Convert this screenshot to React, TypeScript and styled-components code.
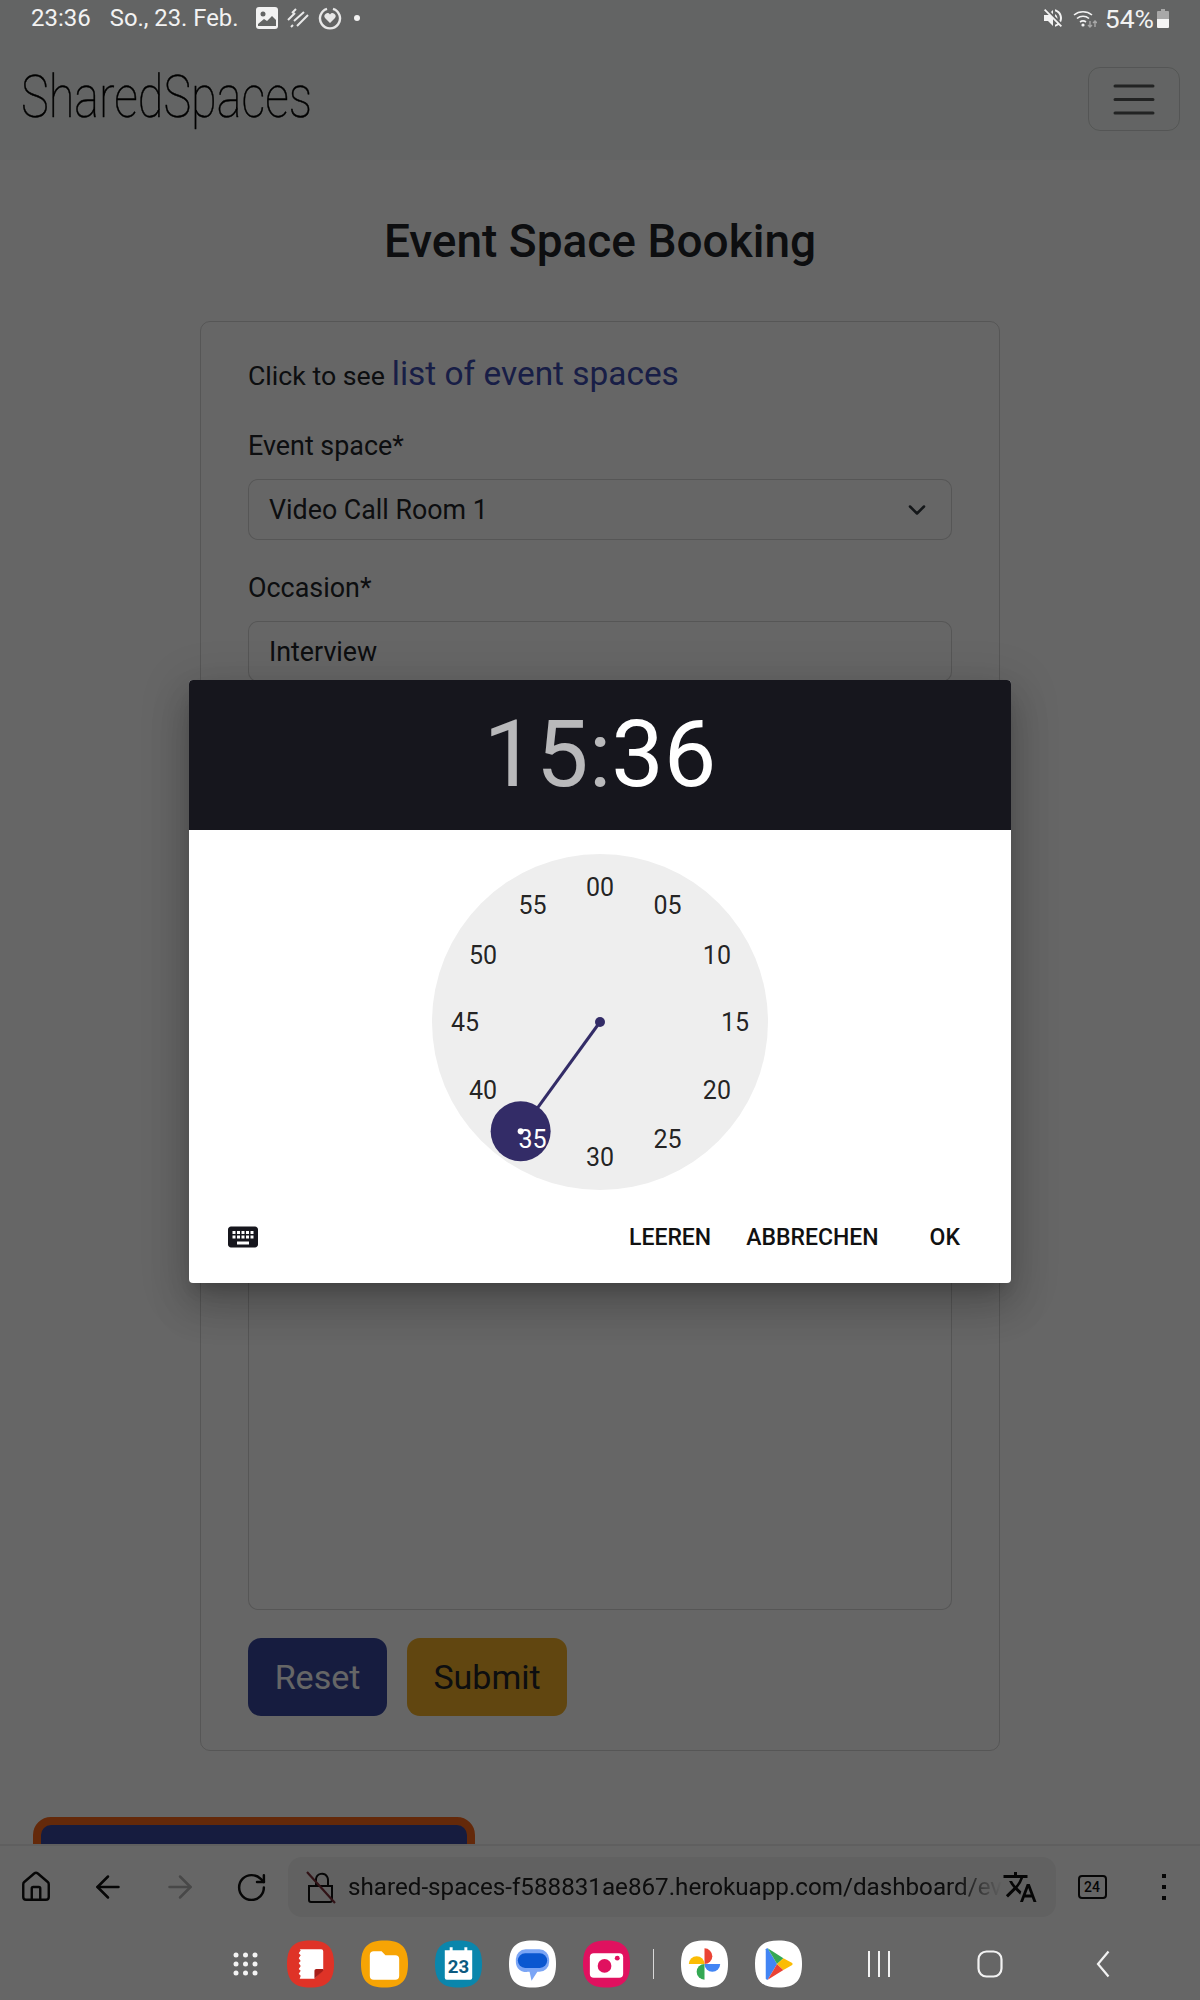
import * as React from "react";
import styled, { createGlobalStyle } from "styled-components";
import { ArrowLeft, ArrowRight, ChevronDown, House, RotateCw } from "lucide-react";
import { MdKeyboard, MdTranslate, MdVolumeOff } from "react-icons/md";

const GlobalStyle = createGlobalStyle`
  html, body {
    margin: 0;
    padding: 0;
    background: #fff;
  }
  * {
    box-sizing: border-box;
  }
  body {
    font-family: Roboto, "Liberation Sans", sans-serif;
    color: #212529;
  }
`;

const Screen = styled.div`
  position: relative;
  display: flex;
  flex-direction: column;
  width: 1200px;
  height: 2000px;
  overflow: hidden;
  background: #fff;
`;

const Backdrop = styled.div`
  position: absolute;
  inset: 0;
  z-index: 1;
  background: rgba(0, 0, 0, 0.6);
`;

/* ---- page behind the dialog ---- */

const Viewport = styled.div`
  height: 1844px;
  overflow: hidden;
  flex: none;
`;

const Navbar = styled.header`
  display: flex;
  flex-direction: column;
  height: 160px;
  padding-top: 40px;
  background: #f7fbf9;
`;

const NavRow = styled.div`
  display: flex;
  align-items: flex-start;
  justify-content: space-between;
  padding: 27px 20px 0 21px;
`;

const Brand = styled.a`
  display: block;
  font-size: 60px;
  font-weight: 100;
  line-height: 60px;
  color: #000;
  white-space: nowrap;
  -webkit-text-stroke: 0.5px #000;
  transform: scaleX(0.78);
  transform-origin: left center;
`;

const Toggler = styled.button`
  display: flex;
  align-items: center;
  justify-content: center;
  width: 92px;
  height: 64px;
  padding: 0;
  background: transparent;
  border: 1px solid rgba(0, 0, 0, 0.15);
  border-radius: 12px;
`;

const Main = styled.main`
  padding-top: 51px;
`;

const Title = styled.h1`
  margin: 0 0 50px;
  font-size: 46px;
  font-weight: 500;
  line-height: 60px;
  text-align: center;
`;

const Card = styled.section`
  width: 800px;
  height: 1430px;
  margin: 0 auto;
  padding: 28px 47px 0;
  border: 1px solid rgba(0, 0, 0, 0.16);
  border-radius: 10px;
`;

const Intro = styled.p`
  display: flex;
  align-items: baseline;
  gap: 7px;
  height: 48px;
  margin: 0 0 29px;
  font-size: 26.7px;
  line-height: 48px;
`;

const Link = styled.a`
  font-size: 33.400px;
  color: #3d4bb0;
`;

const Field = styled.div`
  margin-bottom: 29px;
`;

const Label = styled.label`
  display: block;
  margin-bottom: 14px;
  font-size: 26.9px;
  line-height: 38px;
`;

const Control = styled.div`
  display: flex;
  align-items: center;
  justify-content: space-between;
  height: 61px;
  padding: 0 20px;
  font-size: 26.8px;
  background: #fff;
  border: 1px solid rgba(0, 0, 0, 0.16);
  border-radius: 10px;
`;

const TextArea = styled(Control)`
  height: 421px;
`;

const Actions = styled.div`
  display: flex;
  gap: 20px;
  margin-top: -1px;
`;

const Button = styled.button<{ $tone: "reset" | "submit" }>`
  height: 78px;
  width: ${(p) => (p.$tone === "reset" ? "139px" : "160px")};
  padding: 0;
  font-family: inherit;
  font-size: 34px;
  color: ${(p) => (p.$tone === "reset" ? "#fff" : "#212529")};
  background: ${(p) => (p.$tone === "reset" ? "#37489f" : "#f2af28")};
  border: 0;
  border-radius: 13px;
`;

const FooterBox = styled.div`
  width: 442px;
  height: 120px;
  margin: 66px 0 0 33px;
  background: #38489f;
  border: 8px solid #fa6819;
  border-radius: 18px;
`;

/* ---- browser toolbar ---- */

const Toolbar = styled.nav`
  display: flex;
  align-items: center;
  height: 84px;
  flex: none;
  background: #fff;
  border-top: 2px solid #eee;
`;

const ToolIcon = styled.span<{ $w: number; $muted?: boolean }>`
  display: flex;
  align-items: center;
  justify-content: center;
  width: ${(p) => p.$w}px;
  flex: none;
  color: ${(p) => (p.$muted ? "#b4b4b4" : "#111")};
`;

const MoreIcon = styled(ToolIcon)`
  margin-left: 24px;
`;

const UrlPill = styled.div`
  display: flex;
  align-items: center;
  width: 768px;
  height: 60px;
  margin: 0 6px 0 2px;
  padding: 0 18px 0 18px;
  flex: none;
  background: #f2f2f2;
  border-radius: 14px;
`;

const UrlText = styled.span`
  flex: 1;
  margin-left: 12px;
  overflow: hidden;
  font-size: 24.2px;
  color: #222;
  white-space: nowrap;
  mask-image: linear-gradient(to right, #000 93%, transparent 100%);
`;

const TabCount = styled.span`
  display: flex;
  align-items: center;
  justify-content: center;
  width: 29px;
  height: 24px;
  font-size: 14px;
  font-weight: 500;
  color: #111;
  border: 2px solid #111;
  border-radius: 4px;
`;

/* ---- system bars, not dimmed ---- */

const StatusBar = styled.div`
  position: absolute;
  top: 0;
  left: 0;
  right: 0;
  z-index: 2;
  display: flex;
  align-items: center;
  height: 36px;
  padding: 0 31px;
  font-size: 24px;
  color: #f2f2f2;
`;

const StatusDate = styled.span`
  margin-left: 19px;
  margin-right: 18px;
  font-size: 23.8px;
`;

const StatusIcons = styled.div`
  display: flex;
  align-items: center;
  gap: 9px;
`;

const NotifyDot = styled.svg`
  margin-left: 3px;
`;

const StatusRight = styled.div`
  display: flex;
  align-items: center;
  gap: 8px;
  margin-left: auto;
  font-size: 26.5px;
`;

const BatteryIcon = styled.svg`
  margin-left: -5px;
`;

const Taskbar = styled.div`
  position: relative;
  z-index: 2;
  display: flex;
  align-items: center;
  height: 72px;
  flex: none;
  padding: 0 0 0 233px;
`;

const Apps = styled.div`
  display: flex;
  align-items: center;
  gap: 27px;
  margin-left: 29px;
`;

const Divider = styled.span`
  width: 1px;
  height: 30px;
  margin: 0 0 0 -4px;
  background: #d8d8d8;
`;

const SoftKeys = styled.div`
  display: flex;
  align-items: center;
  margin-left: 65px;
`;

const HomeKey = styled.svg`
  margin-left: 86px;
`;

const BackKey = styled.svg`
  margin-left: 93px;
`;

/* ---- time picker dialog ---- */

const Dialog = styled.div`
  position: absolute;
  top: 680px;
  left: 189px;
  z-index: 3;
  display: flex;
  flex-direction: column;
  width: 822px;
  height: 603px;
  overflow: hidden;
  background: #fff;
  border-radius: 4px;
  box-shadow: 0 11px 15px -7px rgba(0, 0, 0, 0.2), 0 24px 38px 3px rgba(0, 0, 0, 0.14),
    0 9px 46px 8px rgba(0, 0, 0, 0.12);
`;

const DialogHead = styled.div`
  display: flex;
  align-items: center;
  justify-content: center;
  height: 150px;
  flex: none;
  font-size: 93.500px;
  line-height: 1;
  background: #16161d;
`;

const TimePart = styled.span<{ $active?: boolean }>`
  color: ${(p) => (p.$active ? "#fff" : "rgba(255, 255, 255, 0.7)")};
`;

const DialogBody = styled.div`
  display: flex;
  justify-content: center;
  padding-top: 24px;
`;

const Clock = styled.div`
  position: relative;
  width: 336px;
  height: 336px;
  background: #eee;
  border-radius: 50%;
`;

const ClockDrawing = styled.svg`
  position: absolute;
  inset: 0;
`;

const Minute = styled.span<{ $selected?: boolean }>`
  position: absolute;
  font-size: 25px;
  line-height: 1;
  color: ${(p) => (p.$selected ? "#fff" : "rgba(0, 0, 0, 0.87)")};
  transform: translate(-50%, -50%);
`;

const DialogActions = styled.div`
  display: flex;
  align-items: center;
  height: 93px;
  margin-top: auto;
  padding: 1px 51px 0 36px;
`;

const ActionButton = styled.button<{ $wide?: boolean }>`
  margin-left: ${(p) => (p.$wide ? "51px" : "35px")};
  padding: 0;
  font-family: inherit;
  font-size: 23px;
  font-weight: 500;
  color: #111;
  background: none;
  border: 0;
`;

const KeyboardButton = styled.span`
  display: flex;
  margin-right: auto;
  color: #16161d;
`;

const minutes = ["00", "05", "10", "15", "20", "25", "30", "35", "40", "45", "50", "55"];

const Squircle: React.FC<{ fill: string; children?: React.ReactNode }> = ({ fill, children }) => (
  <svg width="47" height="48" viewBox="0 0 48 48">
    <path d="M24 0C41 0 48 7 48 24 48 41 41 48 24 48 7 48 0 41 0 24 0 7 7 0 24 0Z" fill={fill} />
    {children}
  </svg>
);

const ClockFace = () => {
  const center = 168;
  const handX = center + 135 * Math.sin((216 * Math.PI) / 180);
  const handY = center - 135 * Math.cos((216 * Math.PI) / 180);
  return (
    <Clock>
      <ClockDrawing width="336" height="336">
        <circle cx={center} cy={center} r="5" fill="#332c67" />
        <line x1={center} y1={center} x2={handX} y2={handY} stroke="#332c67" strokeWidth="3" />
        <circle cx={handX} cy={handY} r="30" fill="#332c67" />
        <circle cx={handX} cy={handY} r="3" fill="#fff" />
      </ClockDrawing>
      {minutes.map((m, i) => {
        const a = (i * 30 * Math.PI) / 180;
        return (
          <Minute
            key={m}
            $selected={m === "35"}
            style={{ left: center + 135 * Math.sin(a), top: center - 135 * Math.cos(a) }}
          >
            {m}
          </Minute>
        );
      })}
    </Clock>
  );
};

const App: React.FC = () => (
  <Screen>
    <GlobalStyle />
    <Viewport>
      <Navbar>
        <NavRow>
          <Brand>SharedSpaces</Brand>
          <Toggler aria-label="menu">
            <svg width="42" height="32" viewBox="0 0 42 32">
              <path d="M2 3h38M2 16.500h38M2 30h38" stroke="#000" strokeOpacity="0.65" strokeWidth="3" strokeLinecap="round" />
            </svg>
          </Toggler>
        </NavRow>
      </Navbar>
      <Main>
        <Title>Event Space Booking</Title>
        <Card>
          <Intro>
            Click to see <Link>list of event spaces</Link>
          </Intro>
          <Field>
            <Label>Event space*</Label>
            <Control>
              Video Call Room 1
              <ChevronDown size={28} strokeWidth={2.2} color="#343a40" />
            </Control>
          </Field>
          <Field>
            <Label>Occasion*</Label>
            <Control>Interview</Control>
          </Field>
          <Field>
            <Label>Date*</Label>
            <Control />
          </Field>
          <Field>
            <Label>Start time*</Label>
            <Control />
          </Field>
          <Field>
            <Label>End time*</Label>
            <Control />
          </Field>
          <Field>
            <Label>Notes</Label>
            <TextArea />
          </Field>
          <Actions>
            <Button $tone="reset">Reset</Button>
            <Button $tone="submit">Submit</Button>
          </Actions>
        </Card>
        <FooterBox />
      </Main>
    </Viewport>

    <Toolbar>
      <ToolIcon $w={72}>
        <House size={34} strokeWidth={1.7} />
      </ToolIcon>
      <ToolIcon $w={72}>
        <ArrowLeft size={36} strokeWidth={1.7} />
      </ToolIcon>
      <ToolIcon $w={72} $muted>
        <ArrowRight size={36} strokeWidth={1.7} />
      </ToolIcon>
      <ToolIcon $w={70}>
        <RotateCw size={33} strokeWidth={1.8} />
      </ToolIcon>
      <UrlPill>
        <svg width="30" height="34" viewBox="0 0 30 34">
          <path d="M3 16h23v14a2 2 0 0 1-2 2H5a2 2 0 0 1-2-2ZM10 16V9a6 6 0 0 1 11-2.500a6 6 0 0 1 1 3.500v6" fill="none" stroke="#111" strokeWidth="2" />
          <path d="M1 2 29 33" stroke="#7a2f38" strokeWidth="2.200" />
        </svg>
        <UrlText>shared-spaces-f588831ae867.herokuapp.com/dashboard/ev</UrlText>
        <MdTranslate size={36} color="#111" />
      </UrlPill>
      <ToolIcon $w={60}>
        <TabCount>24</TabCount>
      </ToolIcon>
      <MoreIcon $w={36}>
        <svg width="6" height="26" viewBox="0 0 6 26">
          <path d="M1 0h4v4H1zM1 11h4v4H1zM1 22h4v4H1z" fill="#111" />
        </svg>
      </MoreIcon>
    </Toolbar>

    <Taskbar>
      <svg width="25" height="24" viewBox="0 0 25 24" fill="#f4f4f4">
        <circle cx="3" cy="3" r="2.500" /><circle cx="12.500" cy="3" r="2.500" /><circle cx="22" cy="3" r="2.500" />
        <circle cx="3" cy="12" r="2.500" /><circle cx="12.500" cy="12" r="2.500" /><circle cx="22" cy="12" r="2.500" />
        <circle cx="3" cy="21" r="2.500" /><circle cx="12.500" cy="21" r="2.500" /><circle cx="22" cy="21" r="2.500" />
      </svg>
      <Apps>
        <Squircle fill="#df3327">
          <path d="M13 9h22a2 2 0 0 1 2 2v19l-9 9H13l1-3-2-2 2-3-2-2 2-3-2-3 2-2-2-3 2-3-2-2 2-3Z" fill="#fff" />
          <path d="M37 29v2l-9 8v-8a2 2 0 0 1 2-2Z" fill="#a81d18" />
        </Squircle>
        <Squircle fill="#f7a404">
          <path d="M9 15a4 4 0 0 1 4-4h8l4 4h10a4 4 0 0 1 4 4v17a4 4 0 0 1-4 4H13a4 4 0 0 1-4-4Z" fill="#fff" />
        </Squircle>
        <Squircle fill="#0a86ac">
          <path d="M10 10h28v28a2 2 0 0 1-2 2H12a2 2 0 0 1-2-2Z" fill="#fff" />
          <path d="M15 7h3v5h-3zM30 7h3v5h-3z" fill="#fff" />
          <text x="24" y="33" textAnchor="middle" fontFamily="Roboto" fontWeight="700" fontSize="19" fill="#0c5a80">23</text>
        </Squircle>
        <Squircle fill="#fff">
          <path d="M17 9h14a10 10 0 0 1 10 10v3a10 10 0 0 1-10 10h-2l-6 9-2-9h-2A10 10 0 0 1 7 22v-3A10 10 0 0 1 17 9Z" fill="#7ba5f5" />
          <rect x="9" y="13" width="30" height="15" rx="7.500" fill="#0b57d0" />
        </Squircle>
        <Squircle fill="#e0115f">
          <path d="M11 13h26a4 4 0 0 1 4 4v17a4 4 0 0 1-4 4H11a4 4 0 0 1-4-4V17a4 4 0 0 1 4-4Z" fill="#fff" />
          <circle cx="22" cy="26" r="7" fill="#e0115f" />
          <circle cx="35" cy="18" r="2.500" fill="#e0115f" />
        </Squircle>
        <Divider />
        <Squircle fill="#fff">
          <path d="M24 24V8a8 8 0 0 1 8 8 8 8 0 0 1-8 8Z" fill="#ea4335" />
          <path d="M24 24h16a8 8 0 0 1-8 8 8 8 0 0 1-8-8Z" fill="#4285f4" />
          <path d="M24 24v16a8 8 0 0 1-8-8 8 8 0 0 1 8-8Z" fill="#34a853" />
          <path d="M24 24H8a8 8 0 0 1 8-8 8 8 0 0 1 8 8Z" fill="#fbbc04" />
        </Squircle>
        <Squircle fill="#fff">
          <path d="M11 9v15h11.500L13 8a2 2 0 0 0-2 1Z" fill="#4285f4" />
          <path d="M11 24v15a2 2 0 0 0 2 1l9.500-16Z" fill="#4285f4" />
          <path d="M13 8 29 18l-6.500 6Z" fill="#34a853" />
          <path d="M13 40l16-10-6.500-6Z" fill="#ea4335" />
          <path d="M29 18l9 5a1.500 1.500 0 0 1 0 2l-9 5-6.500-6Z" fill="#fbbc04" />
        </Squircle>
      </Apps>
      <SoftKeys>
        <svg width="24" height="28" viewBox="0 0 24 28">
          <path d="M2 1v26M12 1v26M22 1v26" stroke="#f2f2f2" strokeWidth="2" />
        </svg>
        <HomeKey width="26" height="28" viewBox="0 0 26 28">
          <rect x="1.500" y="1.500" width="23" height="25" rx="8" fill="none" stroke="#f2f2f2" strokeWidth="2.200" />
        </HomeKey>
        <BackKey width="14" height="28" viewBox="0 0 14 28">
          <path d="M12.500 1.500 2 14l10.500 12.500" fill="none" stroke="#f2f2f2" strokeWidth="2.200" />
        </BackKey>
      </SoftKeys>
    </Taskbar>

    <Backdrop />

    <StatusBar>
      <span>23:36</span>
      <StatusDate>So., 23. Feb.</StatusDate>
      <StatusIcons>
        <svg width="22" height="22" viewBox="0 0 22 22">
          <rect width="22" height="22" rx="3" fill="#f2f2f2" />
          <circle cx="7" cy="7" r="2.500" fill="#636564" />
          <path d="M2 17 8 12l3 2 5-5 4 4v6H2Z" fill="#636564" />
        </svg>
        <svg width="22" height="20" viewBox="0 0 22 20">
          <path d="M5 5 9 1M1 12 8 5M7 13 17 4M4 19 6 17M10 18 21 7" stroke="#e8e8e8" strokeWidth="2" />
        </svg>
        <svg width="24" height="24" viewBox="0 0 24 24">
          <path d="M15 2.800A10 10 0 1 1 9 2.800" fill="none" stroke="#e8e8e8" strokeWidth="2.400" />
          <path d="M12 17l-5-5a3 3 0 0 1 5-3.500A3 3 0 0 1 17 12Z" fill="#e8e8e8" />
        </svg>
        <NotifyDot width="6" height="6" viewBox="0 0 6 6">
          <circle cx="3" cy="3" r="3" fill="#f2f2f2" />
        </NotifyDot>
      </StatusIcons>
      <StatusRight>
        <MdVolumeOff size={24} color="#f2f2f2" />
        <svg width="24" height="20" viewBox="0 0 24 20">
          <path d="M1 7a14 14 0 0 1 18 0M4 10.500a9 9 0 0 1 12 0M7 14a5 5 0 0 1 6 0" fill="none" stroke="#f2f2f2" strokeWidth="1.600" />
          <circle cx="10" cy="17" r="1.600" fill="#f2f2f2" />
          <path d="M17 13v6M15 17l2 2 2-2M22 19v-6M20 15l2-2 2 2" fill="none" stroke="#a8a8a8" strokeWidth="1.400" />
        </svg>
        <span>54%</span>
        <BatteryIcon width="12" height="19" viewBox="0 0 12 19">
          <path d="M4 0h4v2h3a1 1 0 0 1 1 1v7H0V3a1 1 0 0 1 1-1h3Z" fill="#a8a8a8" />
          <path d="M0 10h12v8a1 1 0 0 1-1 1H1a1 1 0 0 1-1-1Z" fill="#f5f5f5" />
        </BatteryIcon>
      </StatusRight>
    </StatusBar>

    <Dialog>
      <DialogHead>
        <TimePart>15:</TimePart>
        <TimePart $active>36</TimePart>
      </DialogHead>
      <DialogBody>
        <ClockFace />
      </DialogBody>
      <DialogActions>
        <KeyboardButton>
          <MdKeyboard size={36} />
        </KeyboardButton>
        <ActionButton>LEEREN</ActionButton>
        <ActionButton>ABBRECHEN</ActionButton>
        <ActionButton $wide>OK</ActionButton>
      </DialogActions>
    </Dialog>
  </Screen>
);

export default App;
